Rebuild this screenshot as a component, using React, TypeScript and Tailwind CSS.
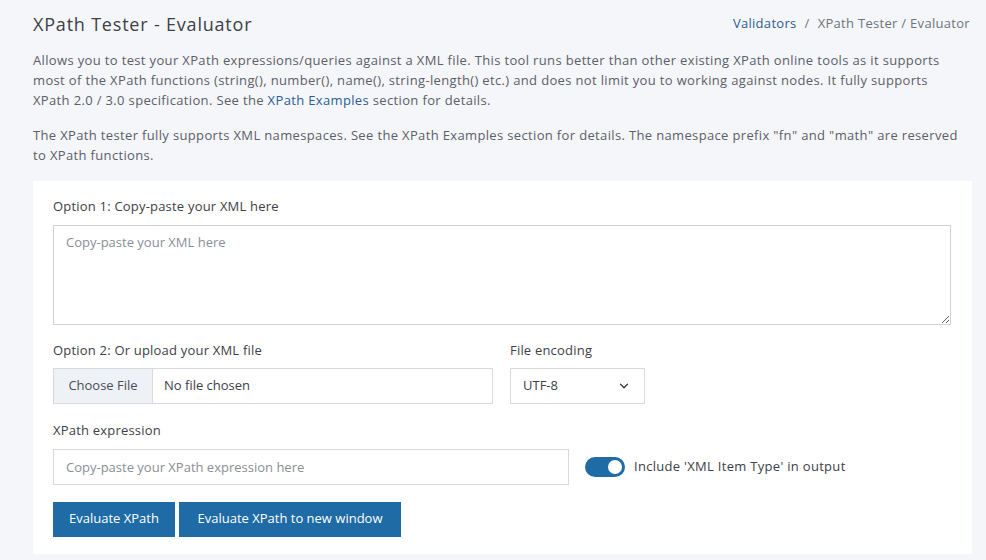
import { ChevronDown } from 'lucide-react'

export default function App() {
  return (
    <div className="min-h-[560px] bg-[#f5f6fa] pl-[33px] pr-[14px] pt-[12px] pb-[7px] font-['Open_Sans',sans-serif] text-[#5b6069]">
      {/* Header */}
      <div className="flex items-center justify-between h-[24px]">
        <h1 className="text-[18px] text-[#3d4148] tracking-[0.8px]">XPath Tester - Evaluator</h1>
        <div className="text-[13px] text-[#6c757d] pr-[2px] tracking-[0.3px]">
          <span className="text-[#2c5d92]">Validators</span>
          <span className="mx-[8px]">/</span>
          <span>XPath Tester / Evaluator</span>
        </div>
      </div>

      <p className="mt-[14px] text-[13px] leading-[20px] tracking-[0.35px] pr-[20px]">
        Allows you to test your XPath expressions/queries against a XML file. This tool runs better than other existing XPath online tools as it supports most of the XPath functions (string(), number(), name(), string-length() etc.) and does not limit you to working against nodes. It fully supports XPath 2.0 / 3.0 specification. See the <span className="text-[#2c5d92]">XPath Examples</span> section for details.
      </p>
      <p className="mt-[15px] text-[13px] leading-[20px] tracking-[0.35px] pr-[6px]">
        The XPath tester fully supports XML namespaces. See the XPath Examples section for details. The namespace prefix "fn" and "math" are reserved to XPath functions.
      </p>

      {/* Form card */}
      <div className="mt-[16px] bg-white px-[20px] pt-[16px] pb-[17px]">
        <label className="block text-[13px] text-[#3d4148] tracking-[0.2px]">Option 1: Copy-paste your XML here</label>
        <textarea
          placeholder="Copy-paste your XML here"
          className="mt-[8px] block w-[898px] h-[100px] border border-[#cfd3d8] px-[12px] py-[7px] text-[13px] text-[#495057] placeholder:text-[#8a8f96] outline-none resize-y"
        />

        <div className="mt-[16px] flex gap-[17px]">
          <div>
            <label className="block text-[13px] text-[#3d4148] tracking-[0.2px]">Option 2: Or upload your XML file</label>
            <div className="mt-[8px] flex w-[440px] h-[36px] border border-[#d6d9dd] text-[13px]">
              <div className="w-[99px] bg-[#eef1f6] border-r border-[#d6d9dd] flex items-center justify-center text-[#495057]">Choose File</div>
              <div className="flex items-center pl-[11px] text-[#3d4148]">No file chosen</div>
            </div>
          </div>
          <div>
            <label className="block text-[13px] text-[#3d4148] tracking-[0.2px]">File encoding</label>
            <div className="mt-[8px] flex items-center justify-between w-[135px] h-[36px] border border-[#d6d9dd] pl-[12px] pr-[13px] text-[13px] text-[#3d4148]">
              <span>UTF-8</span>
              <ChevronDown className="w-[14px] h-[14px] text-[#343a40]" strokeWidth={2.2} />
            </div>
          </div>
        </div>

        <label className="mt-[17px] block text-[13px] text-[#3d4148] tracking-[0.2px]">XPath expression</label>
        <div className="mt-[8px] flex items-center">
          <input
            placeholder="Copy-paste your XPath expression here"
            className="w-[516px] h-[36px] border border-[#d6d9dd] px-[12px] text-[13px] placeholder:text-[#8a8f96] outline-none"
          />
          <div className="ml-[16px] w-[40px] h-[20px] rounded-full bg-[#1e6ba6] flex items-center justify-end pr-[3px]">
            <div className="w-[14px] h-[14px] rounded-full bg-white" />
          </div>
          <span className="ml-[9px] text-[13px] text-[#3d4148] tracking-[0.3px]">Include 'XML Item Type' in output</span>
        </div>

        <div className="mt-[17px] flex gap-[4px]">
          <button className="h-[35px] w-[122px] bg-[#1e6ba6] text-white text-[13px]">Evaluate XPath</button>
          <button className="h-[35px] w-[222px] bg-[#1e6ba6] text-white text-[13px]">Evaluate XPath to new window</button>
        </div>
      </div>
    </div>
  )
}
